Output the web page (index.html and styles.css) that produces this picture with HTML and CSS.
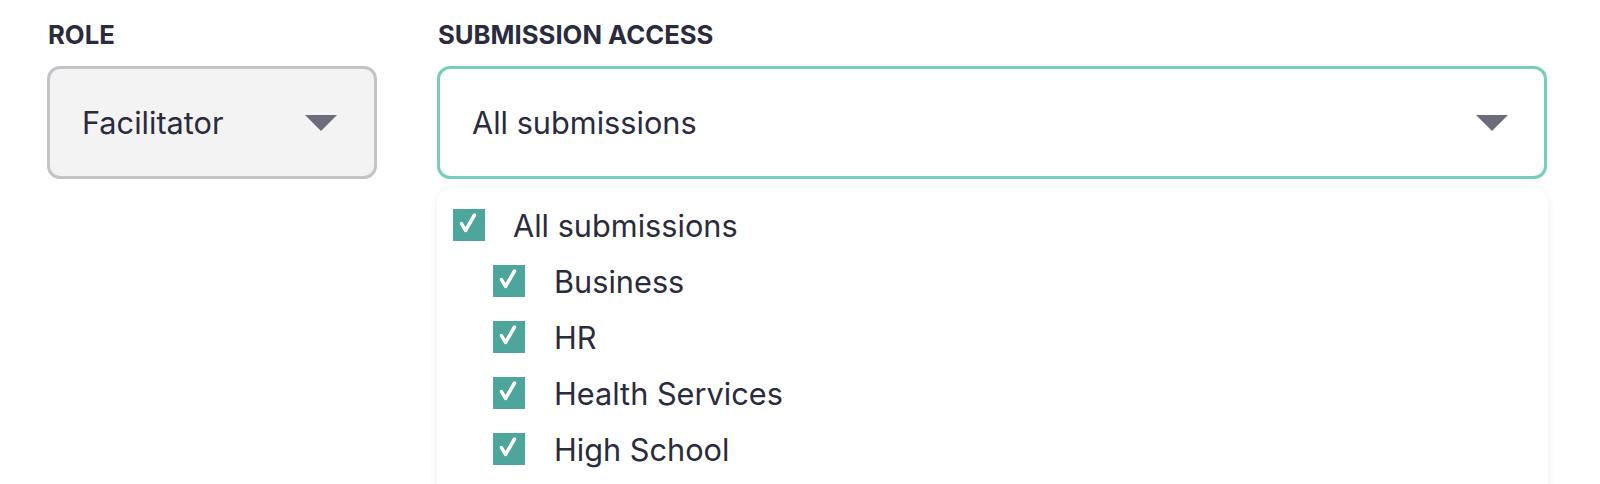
FILE: index.html
```html
<!DOCTYPE html>
<html lang="en">
<head>
  <meta charset="UTF-8">
  <title>Member access</title>
  <link rel="stylesheet" href="styles.css">
</head>
<body>
  <div class="fields">
    <!-- Rolle -->
    <div class="field field-role">
      <label class="field-label">ROLE</label>
      <div class="select select-muted">
        <span>Facilitator</span>
        <span class="caret"></span>
      </div>
    </div>

    <!-- Adgang til indsendelser, med åben dropdown -->
    <div class="field field-access">
      <label class="field-label">SUBMISSION ACCESS</label>
      <div class="select select-open">
        <span>All submissions</span>
        <span class="caret"></span>
      </div>
      <div class="dropdown">
        <div class="option">
          <span class="check"><svg viewBox="0 0 32 32"><path d="M8.5 14.5L12.5 21.5L21.5 6" /></svg></span>
          <span>All submissions</span>
        </div>
        <div class="option child">
          <span class="check"><svg viewBox="0 0 32 32"><path d="M8.5 14.5L12.5 21.5L21.5 6" /></svg></span>
          <span>Business</span>
        </div>
        <div class="option child">
          <span class="check"><svg viewBox="0 0 32 32"><path d="M8.5 14.5L12.5 21.5L21.5 6" /></svg></span>
          <span>HR</span>
        </div>
        <div class="option child">
          <span class="check"><svg viewBox="0 0 32 32"><path d="M8.5 14.5L12.5 21.5L21.5 6" /></svg></span>
          <span>Health Services</span>
        </div>
        <div class="option child">
          <span class="check"><svg viewBox="0 0 32 32"><path d="M8.5 14.5L12.5 21.5L21.5 6" /></svg></span>
          <span>High School</span>
        </div>
      </div>
    </div>
  </div>
</body>
</html>
```

FILE: styles.css
```css
body {
  margin: 0;
  padding: 21px 0 0 47px;
  font-family: 'Inter', 'Roboto', sans-serif;
  color: #2a2b3d;
  background: #fff;
}
.fields {
  display: flex;
  align-items: flex-start;
  gap: 60px;
}
.field {
  display: flex;
  flex-direction: column;
}
.field-role {
  width: 330px;
}
.field-access {
  width: 1110px;
}
.field-label {
  font-size: 25.7px;
  font-weight: 700;
  line-height: 28px;
  margin: 0 0 17px 1px;
}
.select {
  box-sizing: border-box;
  height: 113px;
  border: 3px solid #c3c3c8;
  border-radius: 13px;
  background: #f3f3f3;
  display: flex;
  align-items: center;
  justify-content: space-between;
  padding: 0 37px 0 32px;
  font-size: 30.7px;
}
.select-open {
  border-color: #76cdb9;
  background: #fff;
  padding-right: 36px;
}
.caret {
  width: 0;
  height: 0;
  border-left: 16px solid transparent;
  border-right: 16px solid transparent;
  border-top: 16px solid #6d6c7a;
}
/* Dropdown-listen */
.dropdown {
  margin: 9px -1px 0 0;
  height: 320px;
  background: #fff;
  border-radius: 15px;
  box-shadow: 0 2px 8px rgba(0, 0, 0, 0.08);
  padding: 21px 0 0 16px;
  box-sizing: border-box;
}
.option {
  display: flex;
  align-items: center;
  gap: 28px;
  height: 32px;
  margin-bottom: 24px;
  font-size: 30.7px;
}
.option.child {
  padding-left: 40px;
  gap: 29px;
}
.check {
  width: 32px;
  height: 32px;
  background: #4ea59c;
  flex-shrink: 0;
}
.check svg {
  display: block;
  width: 32px;
  height: 32px;
  fill: none;
  stroke: #fff;
  stroke-width: 3.5;
  stroke-linecap: round;
  stroke-linejoin: round;
}
```
